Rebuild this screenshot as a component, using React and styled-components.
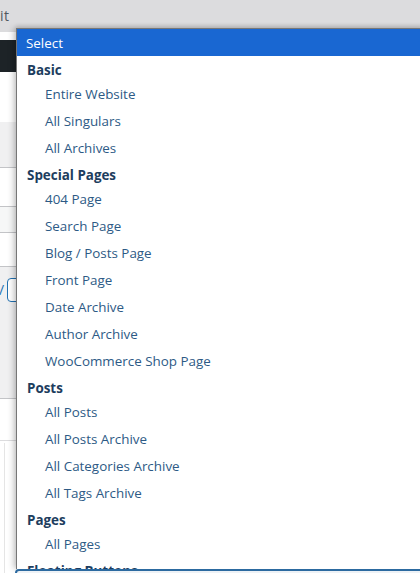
import React from "react";
import styled, { createGlobalStyle } from "styled-components";

const GlobalStyle = createGlobalStyle`
  html, body { margin: 0; padding: 0; background: #fff; overflow: hidden; }
  * { box-sizing: border-box; }
`;

const Page = styled.div`
  position: relative;
  width: 420px;
  height: 573px;
  overflow: hidden;
  font-family: "Open Sans", "Noto Sans", sans-serif;
`;

/* ---------- background admin page ---------- */
const Backdrop = styled.div`
  display: flex;
  flex-direction: column;
  width: 100%;
  height: 100%;
`;

const TopBar = styled.div`
  height: 32px;
  flex: none;
  background: #dcdcde;
  color: #50575e;
  font-size: 14px;
  line-height: 31px;
  letter-spacing: 0.5px;
`;

const Band = styled.div`
  flex: none;
  height: ${(p) => p.$h}px;
  background: ${(p) => p.$bg || "#fff"};
  border-bottom: ${(p) => (p.$line ? "1px solid #c3c4c7" : "none")};
`;

const ToolRow = styled.div`
  flex: none;
  height: 132px;
  background: #f0f0f1;
  border-bottom: 1px solid #c3c4c7;
  display: flex;
  align-items: flex-start;
  gap: 3px;
  padding-top: 11px;
`;

const Slash = styled.span`
  font-size: 14px;
  line-height: 24px;
  color: #2271b1;
  margin-left: -1px;
`;

const InputBox = styled.div`
  width: 80px;
  height: 24px;
  border: 1px solid #2271b1;
  border-radius: 4px;
  background: #fff;
`;

const Table = styled.div`
  flex: 1;
  background: #fff;
  border-top: 1px solid #dcdcde;
  margin-top: 41px;
  display: flex;
`;

const TableCol = styled.div`
  width: 5px;
  margin-top: 2px;
  border-right: 1px solid #e5e5e5;
`;

/* ---------- dropdown list (overlay) ---------- */
const Dropdown = styled.div`
  position: absolute;
  left: 16px;
  top: 28px;
  width: 410px;
  height: 541px;
  background: #fff;
  border-left: 1px solid #767676;
  border-top: 1px solid #767676;
  box-shadow: -3px 0 6px rgba(0, 0, 0, 0.18), 0 -2px 4px rgba(0, 0, 0, 0.12);
  overflow: hidden;
  font-size: 13.4px;
`;

const Selected = styled.div`
  height: 27px;
  padding: 2px 0 0 9px;
  line-height: 25px;
  background: #1967d2;
  color: #fff;
`;

const GroupLabel = styled.div`
  height: 24px;
  padding: 5px 0 0 10px;
  line-height: 19px;
  font-weight: 700;
  color: #1d3d5e;
  white-space: nowrap;
`;

const Option = styled.div`
  height: 27px;
  padding: 2px 0 0 28px;
  line-height: 25px;
  color: #2d5a85;
  white-space: nowrap;
`;

const SelectBox = styled.div`
  position: absolute;
  left: 15px;
  top: 569px;
  width: 420px;
  height: 30px;
  border: 2px solid #2c6aa0;
  border-radius: 4px;
  background: #eef2f6;
`;

const groups = [
  { label: "Basic", items: ["Entire Website", "All Singulars", "All Archives"] },
  {
    label: "Special Pages",
    items: [
      "404 Page",
      "Search Page",
      "Blog / Posts Page",
      "Front Page",
      "Date Archive",
      "Author Archive",
      "WooCommerce Shop Page",
    ],
  },
  {
    label: "Posts",
    items: ["All Posts", "All Posts Archive", "All Categories Archive", "All Tags Archive"],
  },
  { label: "Pages", items: ["All Pages"] },
  { label: "Floating Buttons", items: ["All Floating Buttons"] },
];

export default function App() {
  return (
    <Page>
      <GlobalStyle />
      <Backdrop>
        <TopBar>it</TopBar>
        <Band $h={8} />
        <Band $h={32} $bg="#1d2327" />
        <Band $h={50} />
        <Band $h={46} $bg="#f0f0f1" $line />
        <Band $h={39} $line />
        <Band $h={26} $bg="#f6f7f7" $line />
        <Band $h={34} $line />
        <ToolRow>
          <Slash>/</Slash>
          <InputBox />
        </ToolRow>
        <Table>
          <TableCol />
        </Table>
      </Backdrop>

      <Dropdown>
        <Selected>Select</Selected>
        {groups.map((g) => (
          <React.Fragment key={g.label}>
            <GroupLabel>{g.label}</GroupLabel>
            {g.items.map((it) => (
              <Option key={it}>{it}</Option>
            ))}
          </React.Fragment>
        ))}
      </Dropdown>
      <SelectBox />
    </Page>
  );
}
